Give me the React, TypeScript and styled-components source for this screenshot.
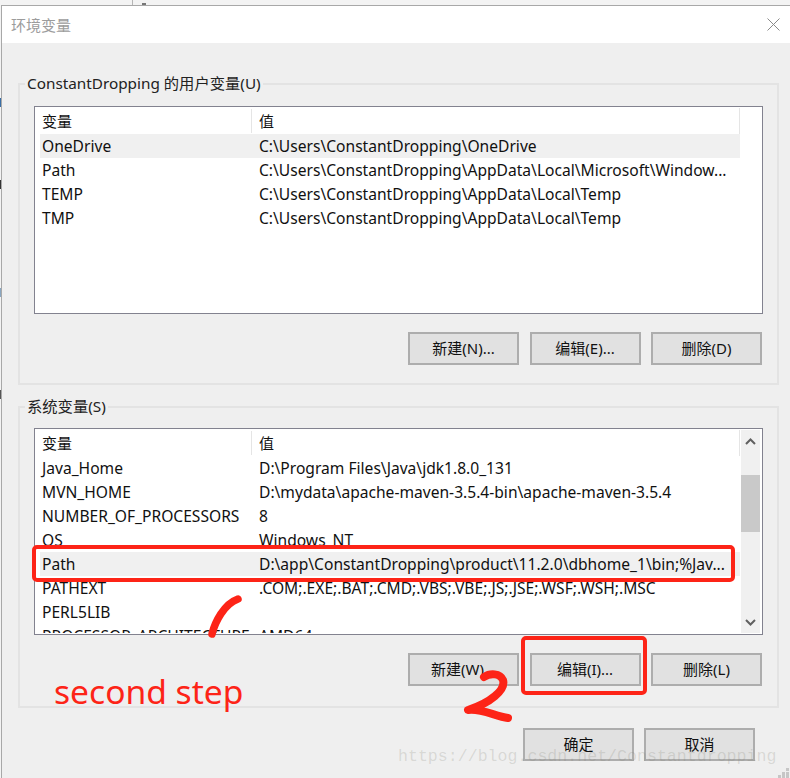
import styled, { createGlobalStyle } from "styled-components";

const GlobalStyle = createGlobalStyle`
  html, body {
    margin: 0;
    padding: 0;
    background: #f3f3f3;
  }
  * {
    box-sizing: border-box;
  }
`;

const Page = styled.div`
  position: relative;
  width: 790px;
  height: 778px;
  overflow: hidden;
  background: #f3f3f3;
  color: #111;
  font-family: "Noto Sans", "Noto Sans CJK SC", sans-serif;
  font-size: 15px;
`;

const BackdropStrip = styled.div`
  display: flex;
  align-items: flex-start;
  height: 5px;
  padding-left: 132px;
`;

const BackdropLine = styled.div`
  width: 1px;
  height: 5px;
  background: #b5b5b5;
`;

const BackdropDot = styled.div`
  width: 4px;
  height: 2px;
  margin: 3px 0 0 9px;
  background: #777;
`;

const BackdropMark = styled.div<{ $top: number; $color: string }>`
  position: absolute;
  left: 0;
  top: ${(p) => p.$top}px;
  width: 1px;
  height: 9px;
  background: ${(p) => p.$color};
`;

const Window = styled.div`
  width: 789px;
  height: 773px;
  margin-left: 1px;
  border-top: 1px solid #a8a8a8;
  border-left: 1px solid #a8a8a8;
  background: #efefef;
`;

const TitleBar = styled.div`
  display: flex;
  align-items: center;
  justify-content: space-between;
  height: 37px;
  padding: 0 10px 0 9px;
  background: #fff;
`;

const Title = styled.div`
  color: #9c9c9c;
  font-size: 15px;
`;

const Body = styled.div`
  display: flex;
  flex-direction: column;
  padding: 40px 11px 0 16px;
`;

const Group = styled.div<{ $bottom: number; $gap?: number }>`
  width: 761px;
  margin-top: ${(p) => p.$gap ?? 0}px;
  padding: 0 15px ${(p) => p.$bottom}px 14px;
  border: 2px solid #e3e3e3;
`;

const GroupTitle = styled.div<{ $height: number }>`
  width: fit-content;
  height: ${(p) => p.$height}px;
  margin: -2px 0 0 -9px;
  padding: 0 2px;
  background: #efefef;
  line-height: 0;
  color: #222;
  font-size: 15.3px;
`;

const List = styled.div<{ $height: number }>`
  display: flex;
  width: 729px;
  height: ${(p) => p.$height}px;
  padding: 1px 2px 1px 5px;
  border: 1px solid #82828f;
  background: #fff;
`;

const Rows = styled.div`
  flex: none;
  width: 700px;
  overflow: hidden;
  font-size: 15.6px;
`;

const HeaderRow = styled.div`
  display: flex;
  align-items: center;
  height: 26px;
  font-size: 15px;
  border-right: 1px solid #e5e5e5;
`;

const Row = styled.div<{ $selected?: boolean }>`
  display: flex;
  align-items: center;
  height: 24px;
  background: ${(p) => (p.$selected ? "#f0f0f0" : "transparent")};
`;

const NameCell = styled.div<{ $divided?: boolean }>`
  flex: none;
  width: 212px;
  padding-left: 2px;
  line-height: 24px;
  white-space: nowrap;
  border-right: ${(p) => (p.$divided ? "1px solid #e5e5e5" : "none")};
`;

const ValueCell = styled.div`
  padding-left: 7px;
  line-height: 24px;
  white-space: nowrap;
`;

const Scrollbar = styled.div`
  display: flex;
  flex-direction: column;
  width: 19px;
  margin-left: 1px;
  background: #f0f0f0;
`;

const ArrowSlot = styled.div`
  display: flex;
  align-items: center;
  justify-content: center;
  flex: none;
  height: 22px;
  color: #606060;
`;

const Thumb = styled.div`
  flex: none;
  height: 57px;
  margin-top: 23px;
  background: #c9c9c9;
`;

const ScrollSpacer = styled.div`
  flex: 1;
`;

const Actions = styled.div`
  display: flex;
  justify-content: flex-end;
  gap: 10.5px;
  margin-top: 18px;
`;

const Footer = styled.div`
  display: flex;
  justify-content: flex-end;
  gap: 10px;
  margin-top: 20px;
  padding-right: 24px;
`;

const Button = styled.div`
  display: flex;
  align-items: center;
  justify-content: center;
  width: 111px;
  height: 33px;
  padding-bottom: 2px;
  border: 2px solid #adadad;
  background: #e1e1e1;
  color: #111;
  font-size: 15px;
`;

const Ink = "#fd2417";

const RedFrame = styled.div<{ $x: number; $y: number; $w: number; $h: number }>`
  position: absolute;
  left: ${(p) => p.$x}px;
  top: ${(p) => p.$y}px;
  width: ${(p) => p.$w}px;
  height: ${(p) => p.$h}px;
  border: 4px solid ${Ink};
  border-radius: 5px;
`;

const Scribbles = styled.svg`
  position: absolute;
  inset: 0;
  pointer-events: none;
`;

const StepNote = styled.div`
  position: absolute;
  left: 54px;
  top: 668px;
  color: ${Ink};
  font-size: 33.6px;
  line-height: 46px;
  white-space: nowrap;
`;

const Watermark = styled.div`
  position: absolute;
  left: 398px;
  top: 747px;
  color: rgba(120, 120, 105, 0.2);
  font-family: "Liberation Mono", monospace;
  font-size: 16.6px;
  line-height: 20px;
  white-space: nowrap;
`;

const userVars = [
  ["OneDrive", "C:\\Users\\ConstantDropping\\OneDrive"],
  ["Path", "C:\\Users\\ConstantDropping\\AppData\\Local\\Microsoft\\Window..."],
  ["TEMP", "C:\\Users\\ConstantDropping\\AppData\\Local\\Temp"],
  ["TMP", "C:\\Users\\ConstantDropping\\AppData\\Local\\Temp"],
];

const systemVars = [
  ["Java_Home", "D:\\Program Files\\Java\\jdk1.8.0_131"],
  ["MVN_HOME", "D:\\mydata\\apache-maven-3.5.4-bin\\apache-maven-3.5.4"],
  ["NUMBER_OF_PROCESSORS", "8"],
  ["OS", "Windows_NT"],
  ["Path", "D:\\app\\ConstantDropping\\product\\11.2.0\\dbhome_1\\bin;%Jav..."],
  ["PATHEXT", ".COM;.EXE;.BAT;.CMD;.VBS;.VBE;.JS;.JSE;.WSF;.WSH;.MSC"],
  ["PERL5LIB", ""],
  ["PROCESSOR_ARCHITECTURE", "AMD64"],
];

function VarTable({ vars, selected }: { vars: string[][]; selected: string }) {
  return (
    <Rows>
      <HeaderRow>
        <NameCell $divided>变量</NameCell>
        <ValueCell>值</ValueCell>
      </HeaderRow>
      {vars.map(([name, value]) => (
        <Row key={name} $selected={name === selected}>
          <NameCell>{name}</NameCell>
          <ValueCell>{value}</ValueCell>
        </Row>
      ))}
    </Rows>
  );
}

function Chevron({ down }: { down?: boolean }) {
  return (
    <svg width="11" height="7" viewBox="0 0 11 7">
      <path
        d={down ? "M1 1l4.5 4.5L10 1" : "M1 6l4.5-4.5L10 6"}
        fill="none"
        stroke="currentColor"
        strokeWidth="2"
      />
    </svg>
  );
}

export default function App() {
  return (
    <Page>
      <GlobalStyle />
      <BackdropStrip>
        <BackdropLine />
        <BackdropDot />
      </BackdropStrip>
      <Window>
        <TitleBar>
          <Title>环境变量</Title>
          <svg width="13" height="13" viewBox="0 0 13 13">
            <path d="M0.5 0.5l12 12M12.5 0.5l-12 12" stroke="#8a8a8a" strokeWidth="1" fill="none" />
          </svg>
        </TitleBar>
        <Body>
          <Group $bottom={18}>
            <GroupTitle $height={23}>ConstantDropping 的用户变量(U)</GroupTitle>
            <List $height={208}>
              <VarTable vars={userVars} selected="OneDrive" />
            </List>
            <Actions>
              <Button>新建(N)...</Button>
              <Button>编辑(E)...</Button>
              <Button>删除(D)</Button>
            </Actions>
          </Group>
          <Group $bottom={20} $gap={21}>
            <GroupTitle $height={22}>系统变量(S)</GroupTitle>
            <List $height={207}>
              <VarTable vars={systemVars} selected="Path" />
              <Scrollbar>
                <ArrowSlot>
                  <Chevron />
                </ArrowSlot>
                <Thumb />
                <ScrollSpacer />
                <ArrowSlot>
                  <Chevron down />
                </ArrowSlot>
              </Scrollbar>
            </List>
            <Actions>
              <Button>新建(W)...</Button>
              <Button>编辑(I)...</Button>
              <Button>删除(L)</Button>
            </Actions>
          </Group>
          <Footer>
            <Button>确定</Button>
            <Button>取消</Button>
          </Footer>
        </Body>
      </Window>
      <BackdropMark $top={98} $color="#3a6ea5" />
      <BackdropMark $top={180} $color="#333" />
      <BackdropMark $top={288} $color="#8aa6c0" />
      <BackdropMark $top={390} $color="#555" />
      <RedFrame $x={32} $y={545} $w={703} $h={37} />
      <RedFrame $x={521} $y={636} $w={126} $h={59} />
      <Scribbles width="790" height="778" viewBox="0 0 790 778">
        <g fill="none" stroke={Ink} strokeLinecap="round" strokeLinejoin="round">
          <path d="M212 634C215 622 224 604 238 599" strokeWidth="7.5" />
          <path
            d="M484 677C490 673 500 673 503 680C506 690 490 703 468 710C480 708 495 716 508 718"
            strokeWidth="8"
          />
        </g>
        <g fill="#c6c6c6">
          <rect x="786" y="768" width="3" height="3" />
          <rect x="782" y="772" width="3" height="3" />
          <rect x="786" y="772" width="3" height="3" />
          <rect x="778" y="775" width="3" height="3" />
          <rect x="782" y="775" width="3" height="3" />
          <rect x="786" y="775" width="3" height="3" />
        </g>
      </Scribbles>
      <StepNote>second step</StepNote>
      <Watermark>https://blog.csdn.net/Constantdropping</Watermark>
    </Page>
  );
}
